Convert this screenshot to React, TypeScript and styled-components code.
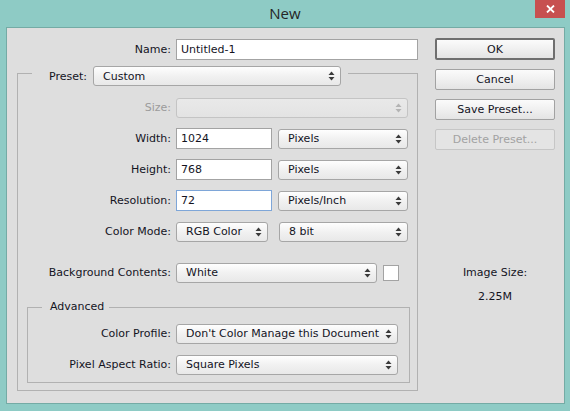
import React from 'react'
import styled, { createGlobalStyle } from 'styled-components'

const Global = createGlobalStyle`
  html, body {
    margin: 0;
    padding: 0;
    background: #8ecbc5;
  }
  * { box-sizing: border-box; }
`

const Window = styled.div`
  width: 570px;
  height: 411px;
  background: #8ecbc5;
  display: flex;
  flex-direction: column;
  font-family: "DejaVu Sans", Verdana, sans-serif;
  font-size: 11px;
  color: #14141f;
`

const TitleBar = styled.div`
  height: 27px;
  flex-shrink: 0;
  display: grid;
  grid-template-columns: 1fr auto 1fr;
`

const Title = styled.div`
  grid-column: 2;
  align-self: center;
  font-family: "Open Sans", "Noto Sans", sans-serif;
  font-size: 15px;
  color: #252525;
  line-height: 20px;
  margin-top: -1px;
`

const CloseButton = styled.div`
  grid-column: 3;
  justify-self: end;
  align-self: start;
  width: 30px;
  height: 18px;
  margin-right: 5px;
  background: #c75050;
  display: flex;
  align-items: center;
  justify-content: center;
`

const Client = styled.div`
  flex: 1;
  margin: 0 5px 7px 6px;
  background: #dedede;
  border: 1px solid #74aba5;
  padding: 10px 0 0 10px;
  display: flex;
  gap: 17px;
`

const LeftColumn = styled.div`
  width: 401px;
  margin-top: 1px;
  display: flex;
  flex-direction: column;
`

const RightColumn = styled.div`
  width: 120px;
  display: flex;
  flex-direction: column;
  align-items: stretch;
  gap: 9px;
`

const Row = styled.div<{ $mt?: number }>`
  display: flex;
  align-items: center;
  gap: 5px;
  height: 21px;
  margin-top: ${p => p.$mt ?? 0}px;
`

const Label = styled.span<{ $w: number; $disabled?: boolean }>`
  width: ${p => p.$w}px;
  flex-shrink: 0;
  text-align: right;
  white-space: nowrap;
  color: ${p => (p.$disabled ? '#9b9b9b' : 'inherit')};
`

const TextInput = styled.div<{ $w: number; $focused?: boolean }>`
  width: ${p => p.$w}px;
  height: 21px;
  background: #fff;
  border: 1px solid ${p => (p.$focused ? '#7ea6d8' : '#a3a3a3')};
  padding-left: 4px;
  display: flex;
  align-items: center;
  white-space: nowrap;
`

const SelectBox = styled.div<{ $w: number; $disabled?: boolean; $gap?: number }>`
  width: ${p => p.$w}px;
  height: 20px;
  margin-left: ${p => p.$gap ?? 0}px;
  border: 1px solid ${p => (p.$disabled ? '#c4c4c4' : '#a6a6a6')};
  border-radius: 3px;
  background: ${p =>
    p.$disabled
      ? 'linear-gradient(#e9e9e9, #e3e3e3)'
      : 'linear-gradient(#fefefe, #f1f1f1 50%, #e8e8e8)'};
  padding: 0 5px 0 9px;
  display: flex;
  align-items: center;
  justify-content: space-between;
  white-space: nowrap;
  flex-shrink: 0;
`

const Swatch = styled.div`
  width: 16px;
  height: 16px;
  margin-left: 1px;
  background: #fff;
  border: 1px solid #a3a3a3;
`

const Group = styled.fieldset<{ $ml?: number; $mr?: number; $pb: number; $mt?: number }>`
  margin: ${p => p.$mt ?? 0}px ${p => p.$mr ?? 0}px 0 ${p => p.$ml ?? 0}px;
  padding: 0 0 ${p => p.$pb}px 0;
  border: 1px solid #b1b1b1;
  min-width: 0;
`

const PresetLegend = styled.legend`
  margin-left: 14px;
  padding: 6px 7px 0 17px;
  display: flex;
  align-items: center;
  gap: 6px;
`

const AdvancedLegend = styled.legend`
  margin-left: 14px;
  padding: 0 5px 0 8px;
  line-height: 14px;
`

const Button = styled.div<{ $default?: boolean; $disabled?: boolean }>`
  height: ${p => (p.$default ? 22 : 21)}px;
  border: ${p => (p.$default ? '2px solid #6f6f6f' : p.$disabled ? '1px solid #c6c6c6' : '1px solid #a2a2a2')};
  border-radius: 2px;
  background: ${p =>
    p.$disabled ? '#e4e4e4' : 'linear-gradient(#fbfbfb, #f0f0f0 50%, #e4e4e4)'};
  color: ${p => (p.$disabled ? '#a2a2a2' : 'inherit')};
  display: flex;
  align-items: center;
  justify-content: center;
`

const Info = styled.div<{ $mt: number }>`
  text-align: center;
  line-height: 14px;
  margin-top: ${p => p.$mt}px;
`

function Arrows({ disabled }: { disabled?: boolean }) {
  const c = disabled ? '#b4b4b4' : '#3a3a3a'
  return (
    <svg width="7" height="10" viewBox="0 0 7 10">
      <polygon points="0.5,4 3.5,0.5 6.5,4" fill={c} />
      <polygon points="0.5,6 3.5,9.5 6.5,6" fill={c} />
    </svg>
  )
}

function Select({ w, value, disabled, gap }: { w: number; value?: string; disabled?: boolean; gap?: number }) {
  return (
    <SelectBox $w={w} $disabled={disabled} $gap={gap}>
      <span>{value}</span>
      <Arrows disabled={disabled} />
    </SelectBox>
  )
}

export default function App() {
  return (
    <Window>
      <Global />
      <TitleBar>
        <Title>New</Title>
        <CloseButton>
          <svg width="9" height="8" viewBox="0 0 9 8">
            <path d="M1 0.5 L8 7.5 M8 0.5 L1 7.5" stroke="#fff" strokeWidth="1.8" />
          </svg>
        </CloseButton>
      </TitleBar>
      <Client>
        <LeftColumn>
          <Row>
            <Label $w={154}>Name:</Label>
            <TextInput $w={242}>Untitled-1</TextInput>
          </Row>
          <Group $pb={7}>
            <PresetLegend>
              <span>Preset:</span>
              <Select w={248} value="Custom" />
            </PresetLegend>
            <Row $mt={11}>
              <Label $w={153} $disabled>Size:</Label>
              <Select w={232} disabled />
            </Row>
            <Row $mt={10}>
              <Label $w={153}>Width:</Label>
              <TextInput $w={96}>1024</TextInput>
              <Select w={130} value="Pixels" gap={1} />
            </Row>
            <Row $mt={10}>
              <Label $w={153}>Height:</Label>
              <TextInput $w={96}>768</TextInput>
              <Select w={130} value="Pixels" gap={1} />
            </Row>
            <Row $mt={10}>
              <Label $w={153}>Resolution:</Label>
              <TextInput $w={96} $focused>72</TextInput>
              <Select w={130} value="Pixels/Inch" gap={1} />
            </Row>
            <Row $mt={10}>
              <Label $w={153}>Color Mode:</Label>
              <Select w={92} value="RGB Color" />
              <Select w={129} value="8 bit" gap={6} />
            </Row>
            <Row $mt={20}>
              <Label $w={153}>Background Contents:</Label>
              <Select w={201} value="White" />
              <Swatch />
            </Row>
            <Group $ml={9} $mr={7} $mt={17} $pb={7}>
              <AdvancedLegend>Advanced</AdvancedLegend>
              <Row $mt={9}>
                <Label $w={143}>Color Profile:</Label>
                <Select w={222} value="Don't Color Manage this Document" />
              </Row>
              <Row $mt={10}>
                <Label $w={143}>Pixel Aspect Ratio:</Label>
                <Select w={222} value="Square Pixels" />
              </Row>
            </Group>
          </Group>
        </LeftColumn>
        <RightColumn>
          <Button $default>OK</Button>
          <Button>Cancel</Button>
          <Button>Save Preset...</Button>
          <Button $disabled>Delete Preset...</Button>
          <Info $mt={107}>Image Size:</Info>
          <Info $mt={1}>2.25M</Info>
        </RightColumn>
      </Client>
    </Window>
  )
}
